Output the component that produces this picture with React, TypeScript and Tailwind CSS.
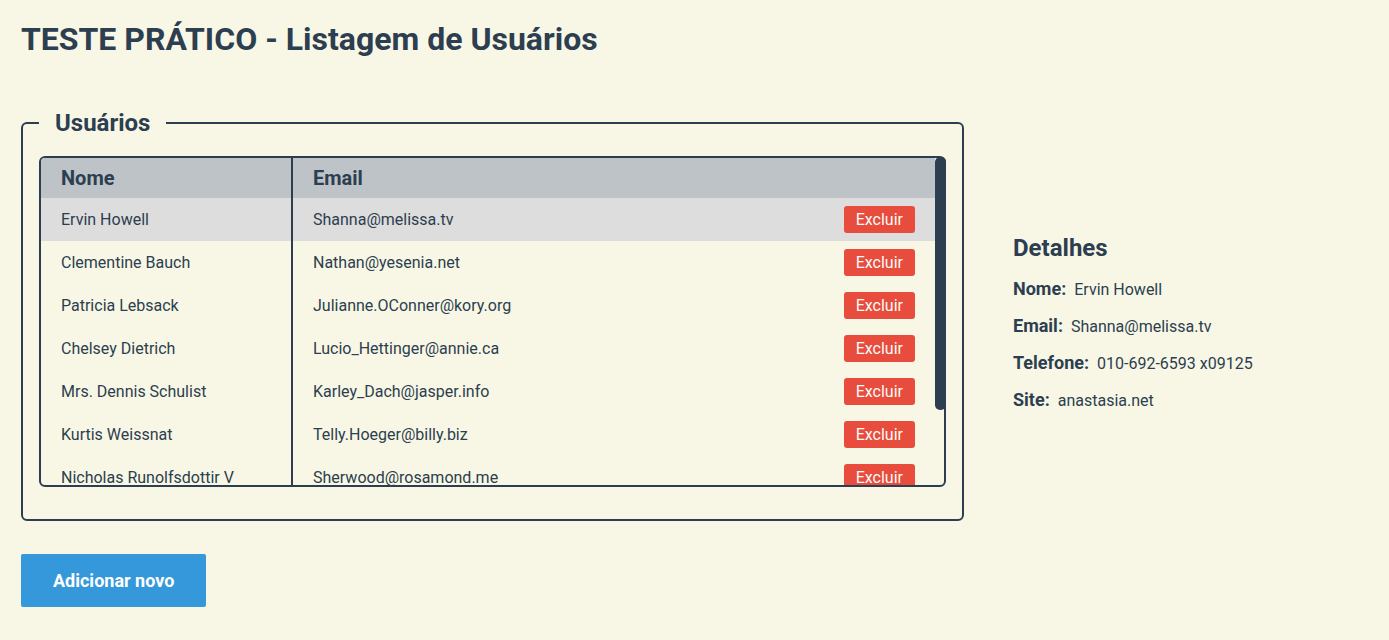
import { useState } from "react";

type User = {
  id: number;
  name: string;
  email: string;
  phone: string;
  website: string;
};

const initialUsers: User[] = [
  { id: 2, name: "Ervin Howell", email: "Shanna@melissa.tv", phone: "010-692-6593 x09125", website: "anastasia.net" },
  { id: 3, name: "Clementine Bauch", email: "Nathan@yesenia.net", phone: "1-463-123-4447", website: "ramiro.info" },
  { id: 4, name: "Patricia Lebsack", email: "Julianne.OConner@kory.org", phone: "493-170-9623 x156", website: "kale.biz" },
  { id: 5, name: "Chelsey Dietrich", email: "Lucio_Hettinger@annie.ca", phone: "(254)954-1289", website: "demarco.info" },
  { id: 6, name: "Mrs. Dennis Schulist", email: "Karley_Dach@jasper.info", phone: "1-477-935-8478 x6430", website: "ola.org" },
  { id: 7, name: "Kurtis Weissnat", email: "Telly.Hoeger@billy.biz", phone: "210.067.6132", website: "elvis.io" },
  { id: 8, name: "Nicholas Runolfsdottir V", email: "Sherwood@rosamond.me", phone: "586.493.6943 x140", website: "jacynthe.com" },
  { id: 9, name: "Glenna Reichert", email: "Chaim_McDermott@dana.io", phone: "(775)976-6794 x41206", website: "conrad.com" },
  { id: 10, name: "Clementina DuBuque", email: "Rey.Padberg@karina.biz", phone: "024-648-3804", website: "ambrose.net" },
];

// visible height of the list, header and row heights
const VIEW = 327;
const HEADER = 40;
const ROW = 43;

export default function App() {
  const [users, setUsers] = useState<User[]>(initialUsers);
  const [selectedId, setSelectedId] = useState<number>(2);
  const [scrollTop, setScrollTop] = useState(0);
  const selected = users.find((u) => u.id === selectedId);

  const contentH = HEADER + users.length * ROW;
  const thumbH = contentH > VIEW ? Math.round((VIEW * VIEW) / contentH) : 0;
  const thumbTop = contentH > VIEW ? (scrollTop * (VIEW - thumbH)) / (contentH - VIEW) : 0;

  return (
    <div className="min-h-screen bg-[#f8f7e5] px-[21px] pt-[20px] pb-8 font-[Roboto,sans-serif] text-[#2c3e50]">
      <h1 className="text-[32px] leading-[38px] font-bold">
        TESTE PRÁTICO - Listagem de Usuários
      </h1>

      <div className="mt-[51px] flex items-start">
        <fieldset className="w-[943px] rounded-md border-2 border-[#2c3e50] px-4 pt-[19px] pb-8">
          <legend className="px-4 text-2xl leading-[28px] font-bold">Usuários</legend>

          <div className="flex h-[331px] rounded-md border-2 border-[#2c3e50]">
            <div
              className="flex-1 overflow-y-auto rounded-l-[4px] [scrollbar-width:none]"
              onScroll={(e) => setScrollTop(e.currentTarget.scrollTop)}
            >
              <div className="sticky top-0 flex h-10 bg-[#bdc3c7] text-xl font-bold">
                <div className="flex w-[252px] shrink-0 items-center border-r-2 border-[#2c3e50] px-5">Nome</div>
                <div className="flex flex-1 items-center px-5">Email</div>
              </div>

              {users.map((u) => (
                <div
                  key={u.id}
                  onClick={() => setSelectedId(u.id)}
                  className={u.id === selectedId ? "flex h-[43px] cursor-pointer bg-[#dddddd]" : "flex h-[43px] cursor-pointer"}
                >
                  <div className="flex w-[252px] shrink-0 items-center border-r-2 border-[#2c3e50] px-5">{u.name}</div>
                  <div className="flex flex-1 items-center justify-between px-5">
                    <span>{u.email}</span>
                    <button
                      onClick={(e) => {
                        e.stopPropagation();
                        setUsers(users.filter((x) => x.id !== u.id));
                      }}
                      className="rounded-[3px] bg-[#e74c3c] px-3 py-1 leading-[19px] text-[#fafafa]"
                    >
                      Excluir
                    </button>
                  </div>
                </div>
              ))}
            </div>

            {/* scrollbar */}
            <div className="relative w-[9px] shrink-0">
              {thumbH > 0 && (
                <div
                  className="absolute left-0 w-[11px] rounded-[5px] bg-[#2c3e50]"
                  style={{ top: thumbTop - 1, height: thumbH + 3 }}
                />
              )}
            </div>
          </div>
        </fieldset>

        {selected && (
          <div className="mt-[125px] ml-[49px]">
            <h2 className="text-2xl leading-[28px] font-bold">Detalhes</h2>
            <div className="mt-[17px] flex flex-col gap-[16px] leading-5">
              <p>
                <b className="text-[18px] leading-5">Nome:</b> <span className="ml-1">{selected.name}</span>
              </p>
              <p>
                <b className="text-[18px] leading-5">Email:</b> <span className="ml-1">{selected.email}</span>
              </p>
              <p>
                <b className="text-[18px] leading-5">Telefone:</b> <span className="ml-1">{selected.phone}</span>
              </p>
              <p>
                <b className="text-[18px] leading-5">Site:</b> <span className="ml-1">{selected.website}</span>
              </p>
            </div>
          </div>
        )}
      </div>

      <button className="mt-[33px] h-[53px] rounded-[2px] bg-[#3498db] px-8 text-[18px] font-bold text-white">
        Adicionar novo
      </button>
    </div>
  );
}
